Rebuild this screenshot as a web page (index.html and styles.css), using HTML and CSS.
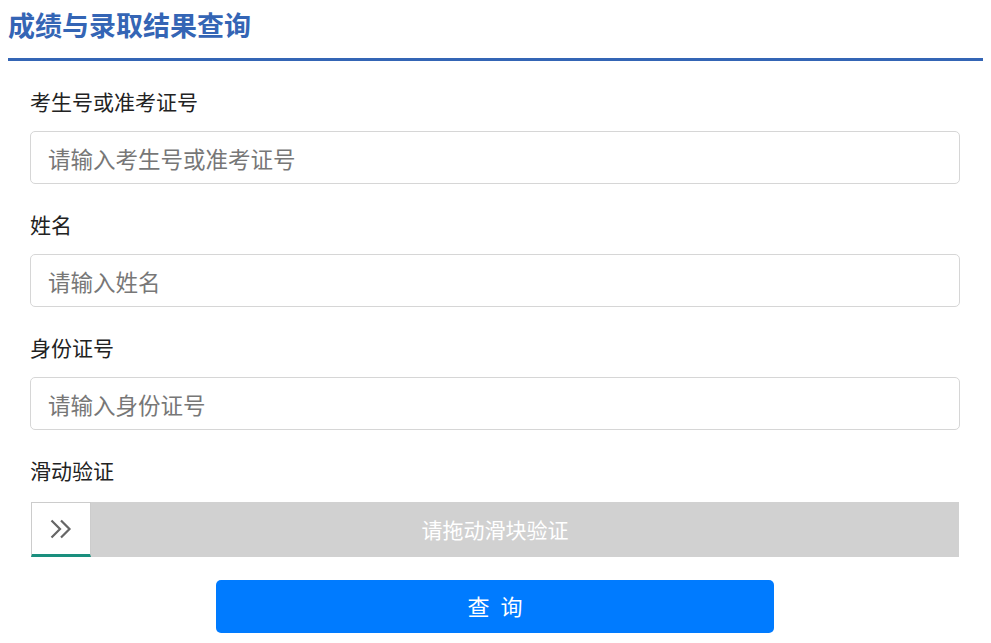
FILE: index.html
```html
<!DOCTYPE html>
<html lang="zh-CN">
<head>
    <meta charset="utf-8">
    <title>成绩与录取结果查询</title>
    <link rel="stylesheet" href="styles.css">
</head>
<body>
<div class="header">
    <h1 class="title">成绩与录取结果查询</h1>
</div>
<form class="queryForm" onsubmit="return false">
    <div class="group">
        <label class="label" for="ksh">考生号或准考证号</label>
        <input class="input" id="ksh" type="text" placeholder="请输入考生号或准考证号">
    </div>
    <div class="group">
        <label class="label" for="xm">姓名</label>
        <input class="input" id="xm" type="text" placeholder="请输入姓名">
    </div>
    <div class="group">
        <label class="label" for="sfzh">身份证号</label>
        <input class="input" id="sfzh" type="text" placeholder="请输入身份证号">
    </div>
    <div class="group groupLast">
        <div class="label">滑动验证</div>
        <div class="slider">
            <div class="handle">
                <svg width="22" height="20" viewBox="0 0 22 20">
                    <polyline points="1.5,1.5 10,10 1.5,18.5" fill="none" stroke="#666" stroke-width="2.2"/>
                    <polyline points="11,1.5 19.5,10 11,18.5" fill="none" stroke="#666" stroke-width="2.2"/>
                </svg>
            </div>
            <div class="sliderText">请拖动滑块验证</div>
        </div>
    </div>
    <div class="btnRow">
        <button class="btn" type="submit">查 询</button>
    </div>
</form>
</body>
</html>
```

FILE: styles.css
```css
body{
    margin: 8px;
    font-family: "Noto Sans CJK SC", "Noto Sans", sans-serif;
    color: #222;
    background: #fff;
}
.header{
    border-bottom: 3px solid #3465b5;
    padding-bottom: 16px;
}
.title{
    margin: 0;
    font-size: 27px;
    line-height: 34px;
    font-weight: bold;
    color: #3465b5;
}
.queryForm{
    padding: 25px 23px 0 22px;
}
.group{
    margin-bottom: 25px;
}
.groupLast{
    margin-bottom: 23px;
}
.label{
    display: block;
    font-size: 21px;
    line-height: 30px;
    margin-bottom: 15px;
}
.groupLast .label{
    margin-bottom: 17px;
}
.input{
    display: block;
    box-sizing: border-box;
    width: 100%;
    height: 53px;
    border: 1px solid #d6d6d6;
    border-radius: 5px;
    padding: 0 17px;
    font-family: inherit;
    font-size: 22.5px;
    color: #333;
    outline: none;
}
.input::placeholder{
    color: #777;
}
.slider{
    display: flex;
    height: 55px;
    margin: 0 1px;
    background: #d1d1d1;
}
.handle{
    box-sizing: border-box;
    width: 60px;
    height: 55px;
    background: #fff;
    border: 1px solid #ccc;
    border-bottom: 3px solid #1a8f7e;
    display: flex;
    align-items: center;
    justify-content: center;
}
.sliderText{
    flex: 1;
    padding-right: 60px;
    text-align: center;
    color: #fff;
    font-size: 21px;
    line-height: 55px;
}
.btnRow{
    display: flex;
    justify-content: center;
}
.btn{
    width: 60%;
    height: 53px;
    border: none;
    border-radius: 5px;
    background: #007bff;
    color: #fff;
    font-family: inherit;
    font-size: 22px;
    letter-spacing: 3px;
    padding: 0 0 3px 3px;
}
```
